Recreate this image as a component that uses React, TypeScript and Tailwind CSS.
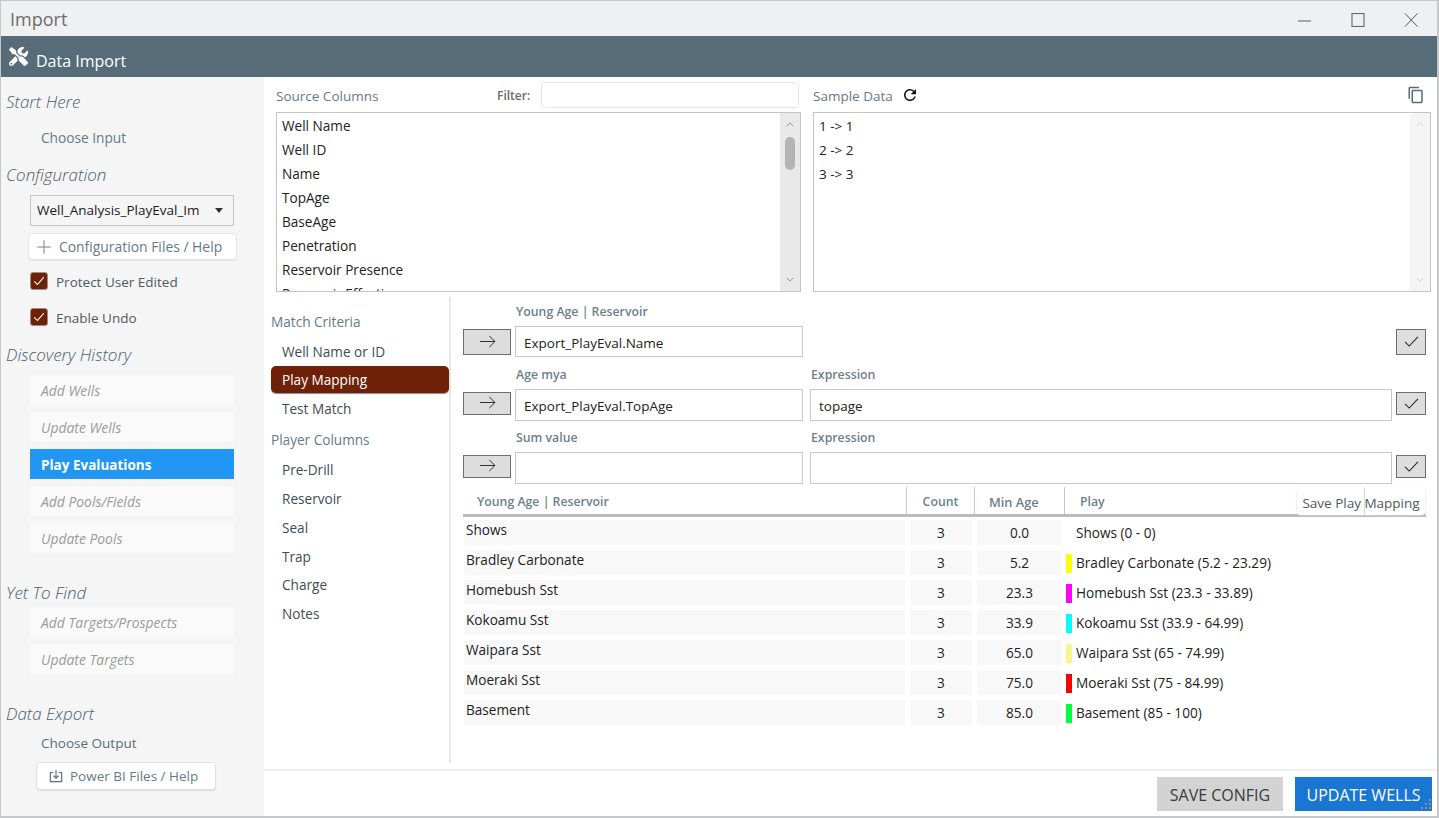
import { FaTools } from "react-icons/fa";
import { MdContentCopy, MdRefresh } from "react-icons/md";
import { Plus } from "lucide-react";

const sourceColumns = ["Well Name", "Well ID", "Name", "TopAge", "BaseAge", "Penetration", "Reservoir Presence", "Reservoir Effectiveness"];
const samples = ["1 -> 1", "2 -> 2", "3 -> 3"];
const players = ["Pre-Drill", "Reservoir", "Seal", "Trap", "Charge", "Notes"];
const rows = [
  { name: "Shows", age: "0.0", play: "Shows (0 - 0)", color: "" },
  { name: "Bradley Carbonate", age: "5.2", play: "Bradley Carbonate (5.2 - 23.29)", color: "bg-[#ffff00]" },
  { name: "Homebush Sst", age: "23.3", play: "Homebush Sst (23.3 - 33.89)", color: "bg-[#ff00ff]" },
  { name: "Kokoamu Sst", age: "33.9", play: "Kokoamu Sst (33.9 - 64.99)", color: "bg-[#00ffff]" },
  { name: "Waipara Sst", age: "65.0", play: "Waipara Sst (65 - 74.99)", color: "bg-[#f6f68c]" },
  { name: "Moeraki Sst", age: "75.0", play: "Moeraki Sst (75 - 84.99)", color: "bg-[#ff0000]" },
  { name: "Basement", age: "85.0", play: "Basement (85 - 100)", color: "bg-[#00ff40]" },
];

function SideHeading({ children, className }: { children: string; className: string }) {
  return <div className={`h-6 pl-[5px] text-[17px] leading-6 italic font-light text-[#4a606e] ${className}`}>{children}</div>;
}

function SideItem({ children, active }: { children: string; active?: boolean }) {
  return (
    <div className={`ml-[29px] flex h-[30px] w-[204px] items-center pt-[2px] pl-[11px] ${active ? "bg-[#2196f3] text-[13.5px] font-bold text-white" : "bg-[#fafafa] text-[13.9px] italic text-[#9b9b9b]"}`}>
      {children}
    </div>
  );
}

function Check({ label, className }: { label: string; className: string }) {
  return (
    <div className={`ml-[29px] flex h-[18px] items-center gap-2 ${className}`}>
      <div className="flex h-[18px] w-[18px] items-center justify-center rounded-[3px] border border-[#a08a84] bg-[#6f2108]">
        <svg viewBox="0 0 16 16" className="h-[14px] w-[14px]" fill="none" stroke="white" strokeWidth="1.2">
          <path d="M2.5 8.5 6.2 12 13.5 3.5" />
        </svg>
      </div>
      <span className="pt-[2px] text-[13.5px] text-[#4c5a63]">{label}</span>
    </div>
  );
}

function ScrollBar({ light }: { light?: boolean }) {
  return (
    <div className={`relative h-full w-[20px] shrink-0 ${light ? "bg-[#f5f5f5]" : "bg-[#e9e9e9]"}`}>
      <svg viewBox="0 0 10 6" className="absolute top-[9px] left-[6px] h-[5px] w-[8px]" fill="none" stroke={light ? "#d0d0d0" : "#808080"} strokeWidth="1">
        <path d="M1 5 5 1 9 5" />
      </svg>
      <svg viewBox="0 0 10 6" className="absolute bottom-[9px] left-[6px] h-[5px] w-[8px]" fill="none" stroke={light ? "#d0d0d0" : "#808080"} strokeWidth="1">
        <path d="M1 1 5 5 9 1" />
      </svg>
      {!light && <div className="absolute top-[24px] left-[5px] h-[33px] w-[10px] rounded-[5px] bg-[#b4b4b4]" />}
    </div>
  );
}

function ArrowButton({ className }: { className: string }) {
  return (
    <button className={`mr-[4px] flex w-[48px] shrink-0 items-center justify-center border border-[#6e6e6e] bg-[#dddddd] pb-[2px] ${className}`}>
      <svg viewBox="0 0 18 14" className="h-[13px] w-[17px]" fill="none" stroke="#222" strokeWidth="1">
        <path d="M1 7H17M11 1l6 6-6 6" />
      </svg>
    </button>
  );
}

function CheckButton({ className }: { className: string }) {
  return (
    <button className={`ml-[4px] flex w-[30px] shrink-0 items-center justify-center border border-[#6e6e6e] bg-[#dddddd] pb-px ${className}`}>
      <svg viewBox="0 0 16 12" className="h-[11px] w-[15px]" fill="none" stroke="#222" strokeWidth="1.1">
        <path d="M1 6.5 5.5 11 15 1" />
      </svg>
    </button>
  );
}

function Field({ label, value, className, height }: { label?: string; value?: string; className: string; height: string }) {
  return (
    <div className={className}>
      <div className="flex h-[18px] items-center pl-px text-[12.3px] font-semibold text-[#6b7f8c]">{label}</div>
      <div className={`mt-[5px] flex items-center border border-[#c9c9c9] bg-white pl-2 text-[13.5px] text-[#222] ${height}`}>{value}</div>
    </div>
  );
}

export default function App() {
  return (
    <div className="relative flex h-[818px] w-[1439px] flex-col overflow-hidden border-t border-r-2 border-b-2 border-l border-[#c4c8c8] bg-white font-['Open_Sans',sans-serif]">
      {/* window title */}
      <div className="flex h-[35px] shrink-0 items-center justify-between bg-[#eff0f2] pl-[9px]">
        <span className="pt-[2px] text-[18px] text-[#6d6d6d]">Import</span>
        <div className="flex items-center gap-[39px] pt-[3px] pr-[19px]">
          <svg viewBox="0 0 14 14" className="h-[14px] w-[14px]" fill="none" stroke="#777" strokeWidth="1.2">
            <path d="M0 8H13" />
          </svg>
          <svg viewBox="0 0 14 14" className="h-[14px] w-[14px]" fill="none" stroke="#666" strokeWidth="1.1">
            <rect x="1" y="0.500" width="12" height="13" />
          </svg>
          <svg viewBox="0 0 14 14" className="h-[14px] w-[14px]" fill="none" stroke="#555" strokeWidth="1">
            <path d="M1 .5 13.500 13.500M13.500 .5 1 13.500" />
          </svg>
        </div>
      </div>

      {/* app bar */}
      <div className="flex h-[41px] shrink-0 items-center bg-[#566d79] pl-[8px] text-white">
        <FaTools className="h-[19px] w-[19px]" />
        <span className="mt-[8px] ml-[8px] text-[16px]">Data Import</span>
      </div>

      <div className="flex min-h-0 flex-1">
        {/* left sidebar */}
        <div className="w-[263px] shrink-0 bg-[#f5f5f5]">
          <SideHeading className="mt-[13px]">Start Here</SideHeading>
          <div className="mt-[14px] flex h-5 items-center pl-10 text-[13.7px] text-[#66798a]">Choose Input</div>
          <SideHeading className="mt-[15px]">Configuration</SideHeading>
          <div className="mt-2 ml-[29px] flex h-[31px] w-[204px] items-center justify-between border border-[#c6c6c6] bg-[#f5f5f5] pr-[10px] pl-[6px] text-[13.5px] text-[#1b1b1b]">
            <span>Well_Analysis_PlayEval_Im</span>
            <span className="h-0 w-0 border-x-[4px] border-t-[5px] border-x-transparent border-t-[#333]" />
          </div>
          <div className="mt-[7px] ml-[27px] flex h-[27px] w-[209px] items-center rounded-[4px] border border-[#e6e6e6] bg-white pt-px pl-[4px] text-[13.9px] text-[#66798a] shadow-[0_1px_1px_#e4e4e4]">
            <Plus size={22} strokeWidth={1} className="mr-[4px]" />
            Configuration Files / Help
          </div>
          <Check label="Protect User Edited" className="mt-[12px]" />
          <Check label="Enable Undo" className="mt-[18px]" />

          <SideHeading className="mt-[17px]">Discovery History</SideHeading>
          <div className="mt-2 flex flex-col gap-[7px]">
            <SideItem>Add Wells</SideItem>
            <SideItem>Update Wells</SideItem>
            <SideItem active>Play Evaluations</SideItem>
            <SideItem>Add Pools/Fields</SideItem>
            <SideItem>Update Pools</SideItem>
          </div>

          <SideHeading className="mt-[28px]">Yet To Find</SideHeading>
          <div className="mt-[2px] flex flex-col gap-[7px]">
            <SideItem>Add Targets/Prospects</SideItem>
            <SideItem>Update Targets</SideItem>
          </div>

          <SideHeading className="mt-[28px]">Data Export</SideHeading>
          <div className="mt-[7px] flex h-5 items-center pl-10 text-[13.5px] text-[#566d79]">Choose Output</div>
          <div className="mt-[9px] ml-[35px] flex h-[28px] w-[180px] items-center rounded-[4px] border border-[#e2e2e2] bg-white pl-[12px] text-[13.5px] text-[#66798a] shadow-[0_1px_1px_#dcdcdc]">
            <svg viewBox="0 0 16 16" className="mr-[7px] h-[14px] w-[14px]" fill="none" stroke="#566d79" strokeWidth="1.3">
              <path d="M5 4H1.5v10.5h13V4H11M8 1v9M5 7.5 8 10.500 11 7.500" />
            </svg>
            Power BI Files / Help
          </div>
        </div>

        {/* main area */}
        <div className="flex min-w-0 flex-1 flex-col">
          {/* source + sample */}
          <div className="mt-[5px] flex h-[26px] pr-[6px] pl-[12px]">
            <div className="flex w-[525px] items-center">
              <span className="w-[221px] pt-[2px] text-[13.5px] text-[#66798a]">Source Columns</span>
              <span className="w-[44px] pt-[2px] text-[12px] font-semibold text-[#6b6b6b]">Filter:</span>
              <div className="h-[26px] w-[258px] rounded-[4px] border border-[#e6e6e6] bg-white" />
            </div>
            <div className="ml-[12px] flex flex-1 items-center">
              <span className="pt-[2px] text-[13.5px] text-[#66798a]">Sample Data</span>
              <MdRefresh className="ml-[8px] text-[18px] text-[#111]" />
              <MdContentCopy className="mr-[6px] ml-auto text-[18px] text-[#566d79]" />
            </div>
          </div>

          <div className="mt-1 flex h-[180px] shrink-0 pr-[6px] pl-[12px]">
            <div className="flex w-[525px] overflow-hidden border border-[#c2c4c8]">
              <div className="flex-1 overflow-hidden pt-px pl-[5px]">
                {sourceColumns.map((c) => (
                  <div key={c} className="flex h-6 items-center text-[13.6px] text-[#222]">{c}</div>
                ))}
              </div>
              <ScrollBar />
            </div>
            <div className="ml-[12px] flex flex-1 overflow-hidden border border-[#c2c4c8]">
              <div className="flex-1 pt-px pl-[5px]">
                {samples.map((s) => (
                  <div key={s} className="flex h-6 items-center text-[13.5px] text-[#222]">{s}</div>
                ))}
              </div>
              <ScrollBar light />
            </div>
          </div>

          {/* mapping */}
          <div className="mt-[5px] flex h-[466px] shrink-0">
            <div className="w-[187px] shrink-0 border-r-2 border-[#e8e8e8] pr-[1px]">
              <div className="mt-[15px] flex h-5 items-center pl-[7px] text-[13.6px] text-[#66798a]">Match Criteria</div>
              <div className="mt-[10px] flex h-5 items-center pl-[18px] text-[13.6px] text-[#3e4d56]">Well Name or ID</div>
              <div className="mt-[4px] ml-[7px] flex h-[27px] w-[178px] items-center rounded-[5px] bg-[#6f2108] pt-px pl-[11px] text-[13.6px] text-white shadow-[0_1px_1px_#8a8a8a]">Play Mapping</div>
              <div className="mt-[6px] flex h-5 items-center pl-[18px] text-[13.6px] text-[#3e4d56]">Test Match</div>
              <div className="mt-[11px] flex h-5 items-center pl-[7px] text-[13.6px] text-[#66798a]">Player Columns</div>
              <div className="mt-[10.400px] flex flex-col gap-[8.800px]">
                {players.map((p) => (
                  <div key={p} className="flex h-5 items-center pl-[18px] text-[13.6px] text-[#3e4d56]">{p}</div>
                ))}
              </div>
            </div>

            <div className="ml-[12px] w-[963px] shrink-0">
              <div className="mt-[6px] flex items-end">
                <ArrowButton className="mb-[2px] h-[26px]" />
                <Field label="Young Age | Reservoir" value="Export_PlayEval.Name" className="w-[288px]" height="h-[31px] pt-[3px]" />
                <div className="flex-1" />
                <CheckButton className="mb-[2px] h-[26px]" />
              </div>
              <div className="mt-[9px] flex items-end">
                <ArrowButton className="mb-[6px] h-[23px]" />
                <Field label="Age mya" value="Export_PlayEval.TopAge" className="w-[288px]" height="h-[32px] pt-[2px]" />
                <Field label="Expression" value="topage" className="ml-[7px] flex-1" height="h-[32px] pt-[2px]" />
                <CheckButton className="mb-[6px] h-[23px]" />
              </div>
              <div className="mt-[8px] flex items-end">
                <ArrowButton className="mb-[6px] h-[23px]" />
                <Field label="Sum value" className="w-[288px]" height="h-[32px]" />
                <Field label="Expression" className="ml-[7px] flex-1" height="h-[32px]" />
                <CheckButton className="mb-[6px] h-[23px]" />
              </div>

              {/* play table */}
              <div className="relative mt-[3px] grid h-[30px] grid-cols-[444px_68px_90px_1fr] border-b-[3px] border-[#bbbbbb] text-[12.3px] font-semibold text-[#6b7f8c]">
                <div className="flex items-center border-r border-[#c8c8c8] pt-[4px] pl-[14px]">Young Age | Reservoir</div>
                <div className="flex items-center justify-center border-r border-[#c8c8c8] pt-[4px]">Count</div>
                <div className="flex items-center border-r border-[#c8c8c8] pt-[4px] pl-[14px] text-[12.8px]">Min Age</div>
                <div className="flex items-center pt-[4px] pl-[15px]">Play</div>
                <div className="absolute top-0 right-px flex h-[28px] w-[128px] items-center justify-center rounded-[4px] bg-white pt-[4px] text-[13.5px] font-normal text-[#4c5a63] shadow-[0_1px_2px_#cfcfcf]">
                  Save Play Mapping
                  <span className="absolute top-0 left-[67px] h-full w-px bg-[#d8d8d8]" />
                </div>
              </div>
              <div className="mt-[3px] flex flex-col gap-[5px]">
                {rows.map((r) => (
                  <div key={r.name} className="grid h-[25px] grid-cols-[444px_68px_90px_1fr] text-[13.6px] text-[#222]">
                    <div className="mr-[2px] ml-px flex items-center bg-[#f8f8f8] pb-[5px] pl-[2px]">{r.name}</div>
                    <div className="mx-[3px] flex items-center justify-center bg-[#f8f8f8]">3</div>
                    <div className="mr-[3px] ml-[2px] flex items-center justify-center bg-[#f8f8f8]">{r.age}</div>
                    <div className="flex items-center">
                      <div className={`mt-[1px] ml-px h-[19px] w-[6px] ${r.color}`} />
                      <span className="ml-[4px]">{r.play}</span>
                    </div>
                  </div>
                ))}
              </div>
            </div>
          </div>

          {/* footer */}
          <div className="mt-[6px] flex flex-1 justify-end gap-[12px] border-t-2 border-[#f0f0f0] pt-[6px] pr-[5px]">
            <button className="h-[34px] w-[126px] bg-[#d3d3d3] pt-[2px] text-[16px] text-[#3a3a3a]">SAVE CONFIG</button>
            <button className="h-[34px] w-[137px] bg-[#1976d2] pt-[2px] text-[16px] text-white">UPDATE WELLS</button>
          </div>
        </div>
      </div>

      {/* resize grip */}
      <svg viewBox="0 0 12 12" className="absolute right-[4px] bottom-[5px] h-[12px] w-[12px]" fill="#8f8f8f">
        <rect x="8" y="0" width="2" height="2" />
        <rect x="4" y="4" width="2" height="2" />
        <rect x="8" y="4" width="2" height="2" />
        <rect x="0" y="8" width="2" height="2" />
        <rect x="4" y="8" width="2" height="2" />
        <rect x="8" y="8" width="2" height="2" />
      </svg>
    </div>
  );
}
